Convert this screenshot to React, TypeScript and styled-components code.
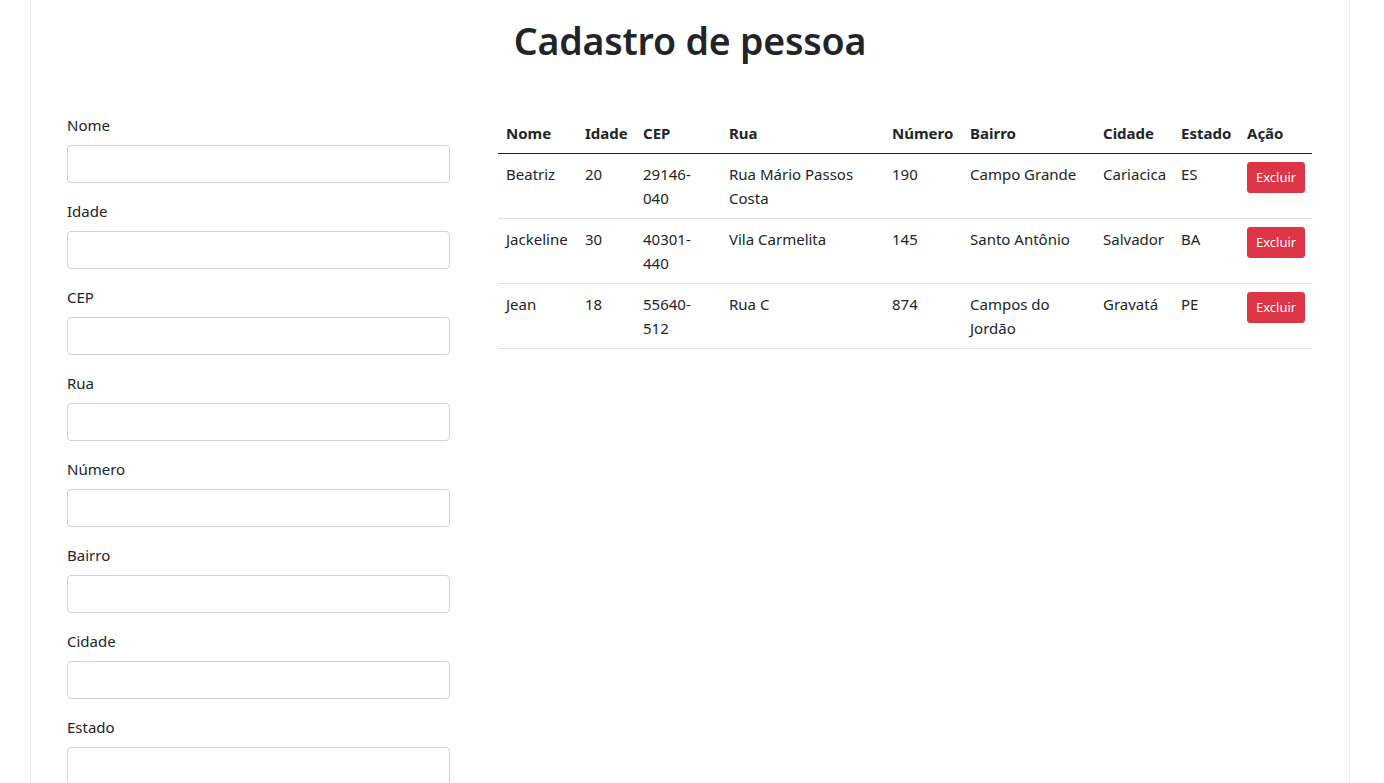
import React from "react";
import styled, { createGlobalStyle } from "styled-components";

const Global = createGlobalStyle`
  html, body { margin: 0; padding: 0; background: #fff; }
  html::-webkit-scrollbar { width: 0; height: 0; display: none; }
  html { scrollbar-width: none; }
  body {
    font-family: "Noto Sans", "Open Sans", "Liberation Sans", sans-serif;
    font-size: 16px;
    line-height: 1.5;
    color: #212529;
  }
  * { box-sizing: border-box; }
`;

const Page = styled.div`
  width: 1320px;
  margin: 0 34px 0 30px;
  min-height: 783px;
  border-left: 1px solid #ececec;
  border-right: 1px solid #ececec;
  padding-top: 17px;
`;

const Title = styled.h1`
  margin: 0 0 48px;
  text-align: center;
  font-size: 37.5px;
  line-height: 48px;
  font-weight: 600;
  letter-spacing: -0.2px;
`;

const Layout = styled.div`
  display: grid;
  grid-template-columns: 383px 1fr;
  column-gap: 48px;
  padding: 0 37px 0 36px;
  align-items: start;
`;

const Form = styled.form`
  display: flex;
  flex-direction: column;
`;

const Field = styled.div`
  margin-bottom: 16px;
`;

const Label = styled.label`
  display: block;
  margin-bottom: 8px;
  font-size: 15px;
  line-height: 24px;
`;

const Input = styled.input`
  display: block;
  width: 100%;
  height: 38px;
  padding: 6px 12px;
  font: inherit;
  color: #212529;
  border: 1px solid #ced4da;
  border-radius: 4px;
  background: #fff;
  outline: none;
`;

const Table = styled.table`
  width: 100%;
  border-collapse: collapse;
  table-layout: fixed;
  font-size: 15px;
`;

const Th = styled.th`
  text-align: left;
  font-weight: 700;
  padding: 8px;
  line-height: 24px;
  border-bottom: 1px solid #212529;
  white-space: nowrap;
`;

const Td = styled.td`
  vertical-align: top;
  padding: 8px;
  line-height: 24px;
  border-bottom: 1px solid #dee2e6;
`;

const DeleteButton = styled.button`
  font-family: inherit;
  font-size: 13px;
  line-height: 21px;
  padding: 4px 8px;
  color: #fff;
  background: #dc3545;
  border: 1px solid #dc3545;
  border-radius: 3px;
  cursor: pointer;
`;

const fields = ["Nome", "Idade", "CEP", "Rua", "Número", "Bairro", "Cidade", "Estado"];

const cols = [79, 58, 86, 163, 78, 133, 78, 66, 73];
const headers = ["Nome", "Idade", "CEP", "Rua", "Número", "Bairro", "Cidade", "Estado", "Ação"];

const rows = [
  ["Beatriz", "20", "29146-040", "Rua Mário Passos Costa", "190", "Campo Grande", "Cariacica", "ES"],
  ["Jackeline", "30", "40301-440", "Vila Carmelita", "145", "Santo Antônio", "Salvador", "BA"],
  ["Jean", "18", "55640-512", "Rua C", "874", "Campos do Jordão", "Gravatá", "PE"],
];

function splitCep(v: string) {
  const [a, b] = v.split("-");
  return (
    <>
      {a}-<br />
      {b}
    </>
  );
}

export default function App() {
  return (
    <>
      <Global />
      <Page>
        <Title>Cadastro de pessoa</Title>
        <Layout>
          <Form onSubmit={(e) => e.preventDefault()}>
            {fields.map((f) => (
              <Field key={f}>
                <Label>{f}</Label>
                <Input type="text" />
              </Field>
            ))}
          </Form>
          <Table>
            <colgroup>
              {cols.map((w, i) => (
                <col key={i} style={{ width: w }} />
              ))}
            </colgroup>
            <thead>
              <tr>
                {headers.map((h) => (
                  <Th key={h}>{h}</Th>
                ))}
              </tr>
            </thead>
            <tbody>
              {rows.map((r) => (
                <tr key={r[0]}>
                  {r.map((c, i) => (
                    <Td key={i}>{i === 2 ? splitCep(c) : c}</Td>
                  ))}
                  <Td>
                    <DeleteButton type="button">Excluir</DeleteButton>
                  </Td>
                </tr>
              ))}
            </tbody>
          </Table>
        </Layout>
      </Page>
    </>
  );
}
